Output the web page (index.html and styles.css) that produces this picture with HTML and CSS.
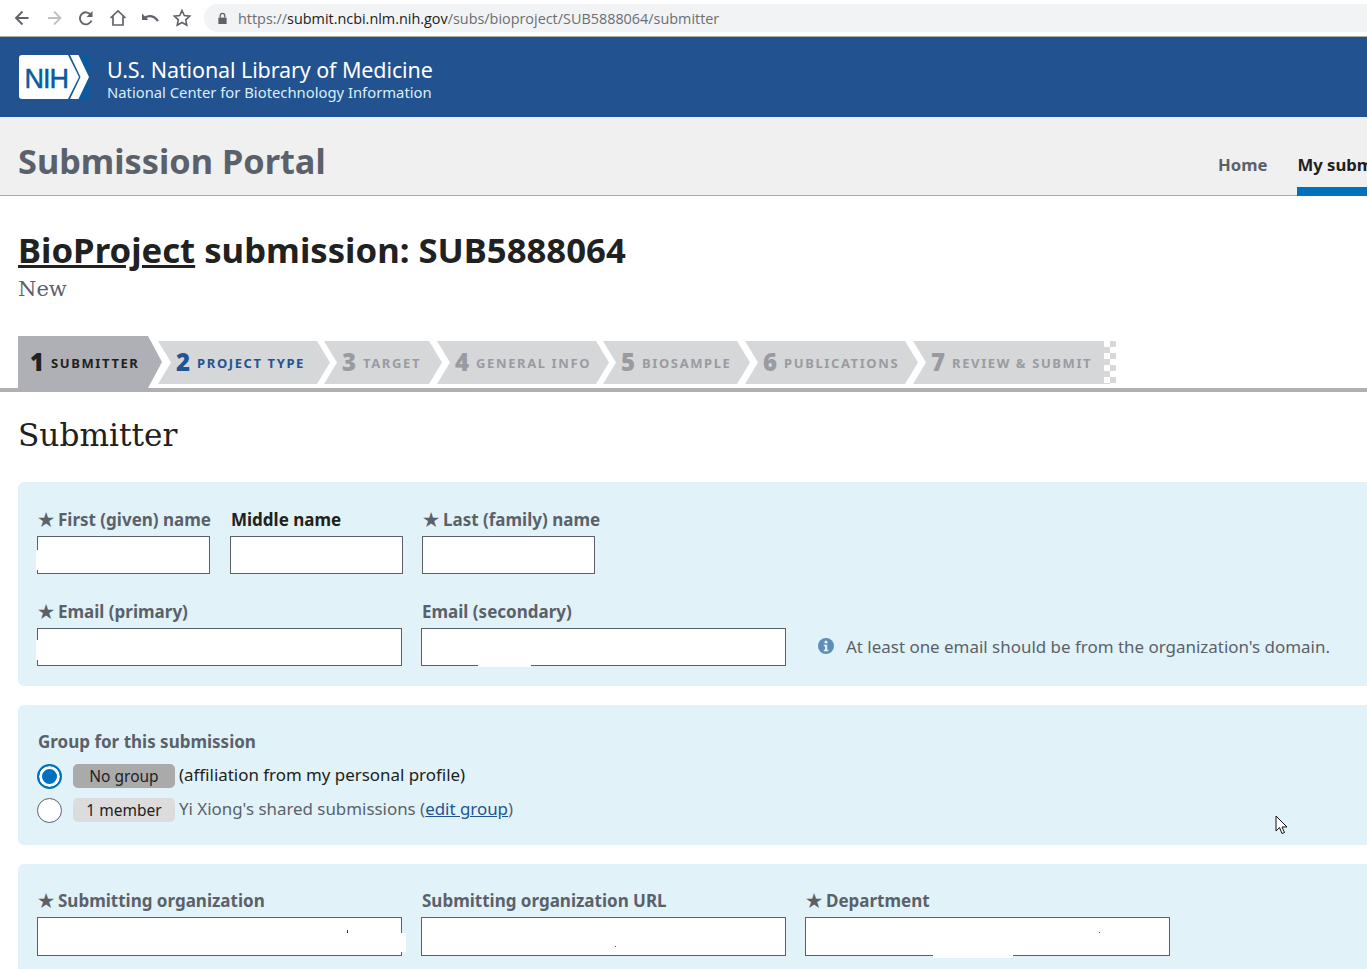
FILE: index.html
```html
<!DOCTYPE html>
<html lang="en">
<head>
  <meta charset="UTF-8">
  <title>Submission Portal</title>
  <link rel="stylesheet" href="styles.css">
</head>
<body>

  <div class="browser-bar">
    <div class="tools">
      <svg class="tool" viewBox="0 0 20 20"><path d="M16.500 10H4.500M10.500 3.500L4 10l6.500 6.500" fill="none" stroke="#5f6368" stroke-width="1.900"/></svg>
      <svg class="tool" viewBox="0 0 20 20"><path d="M4 10h11.500M10 3.500l6.500 6.500-6.500 6.500" fill="none" stroke="#bdc1c6" stroke-width="1.800"/></svg>
      <svg class="tool" viewBox="0 0 20 20"><path d="M15.500 12.500a6 6 0 1 1-.6-5.500" fill="none" stroke="#5f6368" stroke-width="1.900"/><path d="M16.500 3v6h-6z" fill="#5f6368"/></svg>
      <svg class="tool" viewBox="0 0 20 20"><path d="M2.500 10L10 3l7.500 7M5 8.500V17h10V8.500" fill="none" stroke="#5f6368" stroke-width="1.700"/></svg>
      <svg class="tool" viewBox="0 0 20 20"><path d="M2 5.500v6.500h6.500z" fill="#5f6368"/><path d="M4 10.500c3.500-3.500 9.500-3.500 14 2.500" fill="none" stroke="#5f6368" stroke-width="2.200"/></svg>
      <svg class="tool" viewBox="0 0 20 20"><path d="M10 2.500l2.300 5 5.400.6-4 3.700 1.100 5.400L10 14.500l-4.800 2.700 1.100-5.400-4-3.700 5.400-.6z" fill="none" stroke="#5f6368" stroke-width="1.600"/></svg>
    </div>
    <div class="address">
      <svg class="lock" viewBox="0 0 12 14"><path d="M1.500 6h9v7h-9z" fill="#5f6368"/><path d="M3.500 6V4a2.500 2.500 0 0 1 5 0v2" fill="none" stroke="#5f6368" stroke-width="1.400"/></svg>
      <span class="url"><span class="url-dim">https://</span>submit.ncbi.nlm.nih.gov<span class="url-dim">/subs/bioproject/SUB5888064/submitter</span></span>
    </div>
  </div>

  <header class="nlm-header">
    <svg class="nih-logo" viewBox="0 0 70 44">
      <rect width="70" height="44" fill="#0b5a9e"/>
      <path d="M3 0H49L60 22 49 44H3a3 3 0 0 1-3-3V3a3 3 0 0 1 3-3z" fill="#fff"/>
      <path d="M51 0h8.500l10.500 22-10.500 22H51l10.500-22z" fill="#fff"/>
      <text x="5.500" y="32.500" class="nih-text">NIH</text>
    </svg>
    <div class="nlm-names">
      <div class="nlm-title">U.S. National Library of Medicine</div>
      <div class="nlm-sub">National Center for Biotechnology Information</div>
    </div>
  </header>

  <div class="portal-bar">
    <div class="portal-name">Submission Portal</div>
    <nav class="portal-nav">
      <a class="nav-home">Home</a>
      <a class="nav-active">My submissions</a>
    </nav>
  </div>

  <main class="content">
    <h1 class="page-title"><a>BioProject</a> submission: SUB5888064</h1>
    <div class="page-status">New</div>

    <div class="steps">
      <div class="step step-current s1"><b>1</b>SUBMITTER</div>
      <div class="step step-next s2"><b>2</b>PROJECT TYPE</div>
      <div class="step s3"><b>3</b>TARGET</div>
      <div class="step s4"><b>4</b>GENERAL INFO</div>
      <div class="step s5"><b>5</b>BIOSAMPLE</div>
      <div class="step s6"><b>6</b>PUBLICATIONS</div>
      <div class="step step-last s7"><b>7</b>REVIEW &amp; SUBMIT</div>
      <div class="checker"></div>
    </div>

    <h2 class="section-title">Submitter</h2>

    <section class="panel panel-names">
      <div class="row row-first">
        <div class="field w-s"><label class="req">First (given) name</label><input class="input" type="text"><i class="blot blot-first"></i></div>
        <div class="field w-s"><label class="dark">Middle name</label><input class="input" type="text"></div>
        <div class="field w-s"><label class="req">Last (family) name</label><input class="input" type="text"></div>
      </div>
      <div class="row">
        <div class="field w-l"><label class="req">Email (primary)</label><input class="input" type="text"><i class="blot blot-email"></i></div>
        <div class="field w-l"><label>Email (secondary)</label><input class="input" type="text"><i class="blot blot-email2"></i></div>
        <div class="hint">
          <svg class="info" viewBox="0 0 16 16"><circle cx="8" cy="8" r="8" fill="#5f8db8"/><circle cx="8" cy="4" r="1.600" fill="#e0f2f7"/><path d="M5.800 6.800h3.400v5h1.200v1.500H5.800v-1.500H7v-3.500H5.800z" fill="#e0f2f7"/></svg>
          At least one email should be from the organization's domain.
        </div>
      </div>
    </section>

    <section class="panel panel-group">
      <div class="group-title">Group for this submission</div>
      <div class="group-row">
        <span class="radio radio-on"></span>
        <span class="tag tag-dark">No group</span>
        <span class="group-text dark">(affiliation from my personal profile)</span>
      </div>
      <div class="group-row">
        <span class="radio"></span>
        <span class="tag">1 member</span>
        <span class="group-text">Yi Xiong's shared submissions (<a class="edit">edit group</a>)</span>
      </div>
      <svg class="cursor" viewBox="0 0 13 20"><path d="M1 1v15l3.500-3.500 2.500 6 2.500-1-2.500-5.500H12z" fill="#fff" stroke="#111" stroke-width="1"/></svg>
    </section>

    <section class="panel panel-org">
      <div class="row">
        <div class="field w-l"><label class="req">Submitting organization</label><input class="input" type="text"><i class="blot blot-org"></i><i class="speck speck-org"></i></div>
        <div class="field w-l"><label>Submitting organization URL</label><input class="input" type="text"><i class="speck speck-url"></i></div>
        <div class="field w-l"><label class="req">Department</label><input class="input" type="text"><i class="blot blot-dept"></i><i class="speck speck-dept"></i></div>
      </div>
    </section>
  </main>

</body>
</html>
```

FILE: styles.css
```css
* { box-sizing: border-box; }

html, body {
  height: 969px;
  overflow: hidden;
}

body {
  margin: 0;
  width: 1367px;
  font-family: "Noto Sans", sans-serif;
  background-color: white;
  color: #212121;
}

/* browser chrome */
.browser-bar {
  display: flex;
  align-items: center;
  height: 37px;
  padding-left: 12px;
  background-color: white;
  border-bottom: 1px solid #aaa;
}

.tools {
  display: flex;
  gap: 12px;
}

.tool {
  width: 20px;
  height: 20px;
}

.address {
  display: flex;
  align-items: center;
  flex: 1;
  height: 28px;
  margin-left: 12px;
  padding-left: 13px;
  background-color: #f1f3f4;
  border-radius: 14px 0 0 14px;
}

.lock {
  width: 11px;
  height: 13px;
  margin-right: 10px;
}

.url {
  font-family: "Open Sans", sans-serif;
  font-size: 14.400px;
  color: #202124;
}

.url-dim { color: #6b6f75; }

/* blue header */
.nlm-header {
  display: flex;
  align-items: center;
  height: 80px;
  padding-left: 19px;
  background-color: #22528f;
  color: white;
}

.nih-logo {
  width: 70px;
  height: 44px;
  margin-right: 18px;
}

.nih-text {
  font-family: "Liberation Sans", sans-serif;
  font-size: 27px;
  fill: #0b5a9e;
  stroke: #0b5a9e;
  stroke-width: .5px;
  letter-spacing: -1px;
}

.nlm-names { padding-top: 4px; }

.nlm-title {
  font-size: 21.500px;
  line-height: 26px;
  letter-spacing: -.1px;
}

.nlm-sub {
  font-size: 14.800px;
  line-height: 18px;
  color: #dceefa;
}

/* portal bar */
.portal-bar {
  display: flex;
  justify-content: space-between;
  align-items: stretch;
  height: 79px;
  padding-left: 18px;
  background-color: #f0f0f0;
  border-bottom: 1px solid #aaa;
}

.portal-name {
  padding-top: 21px;
  font-size: 34.300px;
  line-height: 46px;
  font-weight: 700;
  color: #5b616b;
}

.portal-nav {
  display: flex;
  gap: 30px;
  width: 149px;
  flex: none;
  white-space: nowrap;
  font-size: 16.700px;
  font-weight: 700;
}

.portal-nav a {
  padding-top: 36px;
  color: #5b616b;
}

.portal-nav .nav-active {
  height: 79px;
  color: #212121;
  border-bottom: 9px solid #0071bc;
}

/* page */
.content {
  padding: 32px 0 0 18px;
}

.page-title {
  margin: 0;
  font-size: 34.700px;
  line-height: 44px;
  font-weight: 700;
  color: #212121;
}

.page-title a { text-decoration: underline; }

.page-status {
  margin-top: 2px;
  font-family: "DejaVu Serif", serif;
  font-size: 21px;
  line-height: 30px;
  color: #5b616b;
}

/* steps */
.steps {
  display: flex;
  align-items: flex-start;
  height: 56px;
  margin-top: 32px;
  margin-left: -18px;
  padding-left: 18px;
  border-bottom: 4px solid #aeb0b5;
}

.step {
  flex: none;
  height: 43px;
  margin-top: 5px;
  margin-left: -5px;
  padding-left: 18px;
  background-color: #d6d7d9;
  clip-path: polygon(0 0, calc(100% - 13px) 0, 100% 50%, calc(100% - 13px) 100%, 0 100%, 13px 50%);
  font-size: 13px;
  line-height: 41px;
  font-weight: 700;
  letter-spacing: 1.600px;
  white-space: nowrap;
  color: #9a9ba1;
}

.step b {
  margin-right: 7px;
  font-size: 24px;
  letter-spacing: 0;
  vertical-align: -3px;
}

.step-current {
  height: 52px;
  margin-top: 0;
  margin-left: 0;
  padding-left: 12px;
  background-color: #aeb0b5;
  clip-path: polygon(0 0, 130px 0, 100% 50%, 130px 100%, 0 100%);
  line-height: 51px;
  color: #212121;
}

.step-next { color: #205493; }

.step-last { clip-path: polygon(0 0, 100% 0, 100% 100%, 0 100%, 13px 50%); }

.s1 { width: 144px; }
.s2 { width: 172px; margin-left: -4px; }
.s3 { width: 118px; margin-left: -6px; }
.s4 { width: 172px; }
.s5 { width: 147px; margin-left: -6px; }
.s6 { width: 173px; }
.s7 { width: 191px; }

.checker {
  width: 12px;
  height: 43px;
  margin-top: 5px;
  background-image: conic-gradient(#d6d7d9 25%, white 0 50%, #d6d7d9 0 75%, white 0);
  background-size: 12px 12px;
}

.section-title {
  margin: 22px 0 26px;
  font-family: "DejaVu Serif", serif;
  font-size: 31.200px;
  line-height: 42px;
  font-weight: 400;
  color: #212121;
}

/* panels */
.panel {
  position: relative;
  margin-bottom: 19px;
  padding-left: 19px;
  background-color: #e1f3f8;
  border-radius: 6px 0 0 6px;
}

.panel-names {
  height: 204px;
  padding-top: 26px;
}

.panel-group {
  height: 140px;
  padding-top: 26px;
}

.panel-org {
  height: 130px;
  padding-top: 25px;
  border-radius: 6px 0 0 0;
  margin-bottom: 0;
}

.panel-org .input { height: 39px; }

.row {
  display: flex;
  gap: 19px;
}

.row-first { margin-bottom: 26px; }

.row-first .field:first-child { margin-right: 1px; }

.field {
  position: relative;
}

.field label {
  display: block;
  height: 28px;
  padding-left: 1px;
  font-size: 17px;
  line-height: 24px;
  font-weight: 700;
  white-space: nowrap;
  color: #5b616b;
}

.field label.req::before {
  content: "★";
  margin-right: 4px;
  font-size: 18px;
  line-height: 1;
}

.field label.dark { color: #212121; }

.input {
  display: block;
  width: 100%;
  height: 38px;
  border: 1px solid #5b616b;
  background-color: white;
}

.w-s { width: 173px; }
.w-l { width: 365px; }

/* scraps of the redaction over the inputs */
.blot {
  position: absolute;
  background-color: white;
}

.blot-first { left: -1px; top: 42px; width: 3px; height: 20px; }
.blot-email { left: -1px; top: 40px; width: 3px; height: 20px; }
.blot-email2 { left: 57px; top: 65px; width: 53px; height: 2px; }
.blot-org { left: 364px; top: 44px; width: 5px; height: 19px; }
.blot-dept { left: 128px; top: 66px; width: 80px; height: 3px; }

.speck {
  position: absolute;
  width: 1px;
  height: 1px;
  background-color: #2a5c9a;
}

.speck-org { left: 310px; top: 41px; height: 3px; background-color: #333; }
.speck-url { left: 194px; top: 57px; }
.speck-dept { left: 294px; top: 43px; }

.hint {
  display: flex;
  align-items: center;
  height: 36px;
  margin-top: 28px;
  margin-left: 13px;
  font-size: 16.950px;
  white-space: nowrap;
  color: #5b616b;
}

.info {
  width: 16px;
  height: 16px;
  margin-right: 12px;
}

.group-title {
  height: 28px;
  padding-left: 1px;
  font-size: 17px;
  line-height: 22px;
  font-weight: 700;
  color: #5b616b;
}

.group-row {
  display: flex;
  align-items: center;
  height: 34px;
  font-size: 16.900px;
  white-space: nowrap;
  color: #5b616b;
}

.group-text { padding-bottom: 3px; }

.radio {
  width: 25px;
  height: 25px;
  margin-right: 11px;
  background-color: white;
  border: 1px solid #5b616b;
  border-radius: 50%;
}

.radio-on {
  background-color: #0071bc;
  border: 2px solid #0071bc;
  box-shadow: inset 0 0 0 3px white;
}

.tag {
  width: 102px;
  height: 24px;
  margin-right: 4px;
  background-color: #dcdcdc;
  border-radius: 5px;
  text-align: center;
  font-size: 15.500px;
  line-height: 24px;
  color: #212121;
}

.tag-dark { background-color: #aaa; }

.group-text.dark { color: #212121; }

.edit {
  color: #205493;
  text-decoration: underline;
}

.cursor {
  position: absolute;
  left: 1257px;
  top: 110px;
  width: 13px;
  height: 20px;
}
```
